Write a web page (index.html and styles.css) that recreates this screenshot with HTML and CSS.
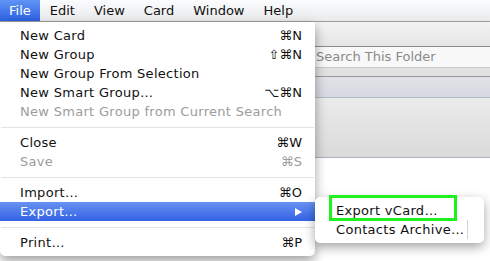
FILE: index.html
```html
<!DOCTYPE html>
<html>
<head>
<meta charset="utf-8">
<link rel="stylesheet" href="styles.css">
</head>
<body>
<div class="screen">
  <div class="menubar">
    <span class="mb-item active">File</span>
    <span class="mb-item">Edit</span>
    <span class="mb-item">View</span>
    <span class="mb-item">Card</span>
    <span class="mb-item">Window</span>
    <span class="mb-item">Help</span>
  </div>
  <div class="window">
    <div class="tb-top"></div>
    <div class="tb-search"><span class="search-ph">Search This Folder</span></div>
    <div class="tb-strip"></div>
    <div class="tb-blue"></div>
    <div class="tb-gray"></div>
    <div class="content"></div>
  </div>

  <div class="menu">
    <div class="row"><span class="label">New Card</span><span class="key">⌘N</span></div>
    <div class="row"><span class="label">New Group</span><span class="key">⇧⌘N</span></div>
    <div class="row"><span class="label">New Group From Selection</span></div>
    <div class="row"><span class="label">New Smart Group…</span><span class="key">⌥⌘N</span></div>
    <div class="row disabled"><span class="label">New Smart Group from Current Search</span></div>
    <div class="sep"></div>
    <div class="row"><span class="label">Close</span><span class="key">⌘W</span></div>
    <div class="row disabled"><span class="label">Save</span><span class="key">⌘S</span></div>
    <div class="sep"></div>
    <div class="row"><span class="label">Import…</span><span class="key">⌘O</span></div>
    <div class="row selected"><span class="label">Export…</span><span class="arrow"></span></div>
    <div class="sep"></div>
    <div class="row"><span class="label">Print…</span><span class="key">⌘P</span></div>
  </div>

  <div class="submenu">
    <div class="row sub"><span class="label">Export vCard…</span></div>
    <div class="row sub outlined"><span class="label">Contacts Archive…</span></div>
  </div>

  <div class="callout"></div>
</div>
</body>
</html>
```

FILE: styles.css
```css
html, body {
  margin: 0;
  padding: 0;
  background: #ffffff;
}

.screen {
  position: relative;
  width: 490px;
  height: 261px;
  overflow: hidden;
  font-family: "DejaVu Sans", "Liberation Sans", sans-serif;
  font-size: 13px;
  color: #111;
}

/* ---------- menu bar ---------- */
.menubar {
  display: flex;
  height: 21px;
  line-height: 21px;
  background: linear-gradient(#fbfcfd, #e9eaec);
  border-bottom: 1px solid #9c9c9c;
}

.mb-item {
  padding: 0 9px 0 9px;
  margin-right: 1px;
  color: #111;
}

.mb-item.active {
  color: #fff;
  background: linear-gradient(#6094f4, #2d60e2);
}

/* ---------- window behind ---------- */
.tb-top {
  height: 24px;
  background: linear-gradient(#f3f3f3, #e5e5e5);
  border-bottom: 1px solid #8d8d8d;
}

.tb-search {
  height: 20px;
  line-height: 20px;
  background: #f8f8f8;
  border-bottom: 1px solid #c9c9c9;
  padding-left: 316px;
}

.search-ph {
  color: #8a8a8a;
}

.tb-strip {
  height: 8px;
  background: #e1e1e1;
  border-bottom: 1px solid #989898;
}

.tb-blue {
  height: 20px;
  background: linear-gradient(#e0e2e8, #d6d9e0);
  border-bottom: 1px solid #b5bacb;
}

.tb-gray {
  height: 59px;
  background: linear-gradient(#ebebeb, #dadada);
  border-bottom: 1px solid #adb2c3;
}

.content {
  height: 110px;
  background: #fff;
}

/* ---------- dropdown menu ---------- */
.menu {
  position: absolute;
  top: 22px;
  left: 0;
  width: 315px;
  padding: 4px 0;
  background: #fff;
  border-radius: 0 0 5px 5px;
  box-shadow: 0 5px 12px rgba(0, 0, 0, 0.38);
}

.row {
  display: flex;
  align-items: center;
  justify-content: space-between;
  height: 19px;
  line-height: 19px;
  padding: 0 13px 0 20px;
  white-space: nowrap;
}

.label {
  letter-spacing: 0.3px;
}

.row.disabled {
  color: #9c9c9c;
}

.row.selected {
  color: #fff;
  background: linear-gradient(#6892f2, #3362e5);
}

.key {
  text-align: right;
}

.arrow {
  width: 0;
  height: 0;
  border-top: 4.5px solid transparent;
  border-bottom: 4.5px solid transparent;
  border-left: 7px solid #fff;
}

.sep {
  height: 1px;
  margin: 6px 1px 5px;
  background: #e2e2e2;
}

/* ---------- submenu ---------- */
.submenu {
  position: absolute;
  top: 197px;
  left: 315px;
  width: 169px;
  padding: 4px 0;
  background: #fff;
  border-radius: 5px;
  box-shadow: 0 4px 11px rgba(0, 0, 0, 0.36);
}

.row.sub {
  padding: 0 0 0 21px;
  justify-content: flex-start;
}

.row.outlined .label {
  padding-right: 3px;
  border-right: 1px solid #d4d4d4;
}

/* ---------- annotation ---------- */
.callout {
  position: absolute;
  left: 329px;
  top: 195px;
  width: 128px;
  height: 26px;
  box-sizing: border-box;
  border: 3px solid #1ff01f;
}
```
